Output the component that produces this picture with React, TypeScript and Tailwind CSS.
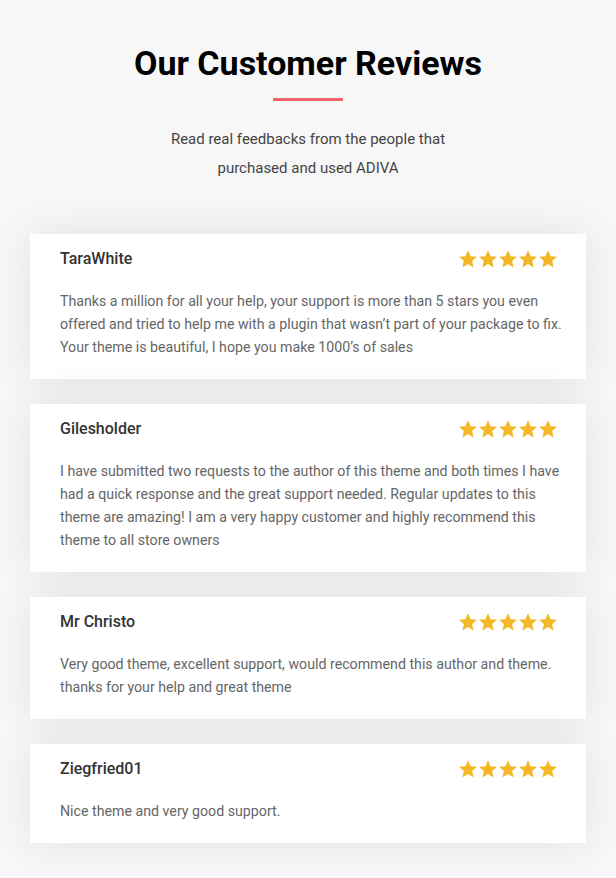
import React from "react";

const reviews = [
  {
    name: "TaraWhite",
    text: "Thanks a million for all your help, your support is more than 5 stars you even offered and tried to help me with a plugin that wasn’t part of your package to fix. Your theme is beautiful, I hope you make 1000’s of sales",
  },
  {
    name: "Gilesholder",
    text: "I have submitted two requests to the author of this theme and both times I have had a quick response and the great support needed. Regular updates to this theme are amazing! I am a very happy customer and highly recommend this theme to all store owners",
  },
  {
    name: "Mr Christo",
    text: "Very good theme, excellent support, would recommend this author and theme. thanks for your help and great theme",
  },
  {
    name: "Ziegfried01",
    text: "Nice theme and very good support.",
  },
];

const Star = () => (
  <svg viewBox="0 0 24 24" className="w-[20px] h-[20px]" fill="#f4b728">
    <path d="M12 1.6l3.1 7.1 7.7.7-5.8 5.1 1.7 7.6L12 18.1l-6.7 4 1.7-7.6-5.8-5.1 7.7-.7z" />
  </svg>
);

const App = () => {
  return (
    <div
      className="w-full min-h-[878px] bg-[#f7f7f7] pt-[42px] pb-[36px]"
      style={{ fontFamily: "Roboto, 'Liberation Sans', sans-serif" }}
    >
      {/* Heading */}
      <div className="flex flex-col items-center">
        <h2 className="text-[34px] leading-[42px] font-bold text-black">Our Customer Reviews</h2>
        <div className="mt-[14px] w-[70px] h-[3px] bg-[#f7636b]"></div>
        <p className="mt-[24px] text-[15px] leading-[29px] text-[#444] text-center w-[300px]">
          Read real feedbacks from the people that purchased and used ADIVA
        </p>
      </div>

      {/* Reviews */}
      <div className="mt-[51px] mx-[30px] flex flex-col gap-[25px]">
        {reviews.map((r) => (
          <div
            key={r.name}
            className="bg-white pl-[30px] pr-[28px] pt-[15px] pb-[20px] shadow-[0_0_40px_rgba(0,0,0,0.09)]"
          >
            <div className="flex items-center justify-between">
              <h3 className="text-[16px] leading-[20px] font-medium text-[#333]">{r.name}</h3>
              <div className="flex">
                {[0, 1, 2, 3, 4].map((i) => (
                  <Star key={i} />
                ))}
              </div>
            </div>
            <p className="mt-[21px] mr-[-10px] text-[14.2px] leading-[23px] text-[#666]">{r.text}</p>
          </div>
        ))}
      </div>
    </div>
  );
};

export default App;
